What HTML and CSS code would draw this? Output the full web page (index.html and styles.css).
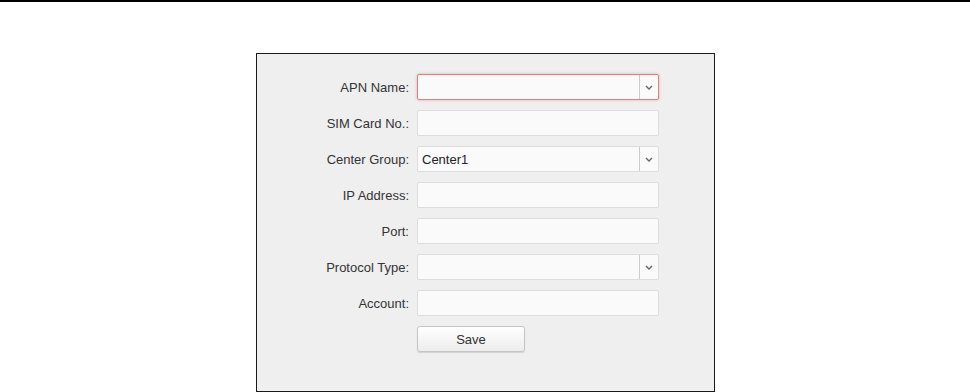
FILE: index.html
```html
<!DOCTYPE html>
<html lang="en">
<head>
  <meta charset="UTF-8">
  <meta name="viewport" content="width=device-width, initial-scale=1.0">
  <title>Mobile Network</title>
  <link rel="stylesheet" href="styles.css">
</head>
<body>
  <div class="topbar"></div>
  <div class="panel">
    <div class="form">
      <label class="lbl">APN Name:</label>
      <div class="field select error"><span class="val"></span><span class="arrow"><svg width="8" height="5" viewBox="0 0 8 5"><path d="M1 1l3 3 3-3" fill="none" stroke="#666" stroke-width="1.4"/></svg></span></div>

      <label class="lbl">SIM Card No.:</label>
      <div class="field"></div>

      <label class="lbl">Center Group:</label>
      <div class="field select"><span class="val">Center1</span><span class="arrow"><svg width="8" height="5" viewBox="0 0 8 5"><path d="M1 1l3 3 3-3" fill="none" stroke="#666" stroke-width="1.4"/></svg></span></div>

      <label class="lbl">IP Address:</label>
      <div class="field"></div>

      <label class="lbl">Port:</label>
      <div class="field"></div>

      <label class="lbl">Protocol Type:</label>
      <div class="field select"><span class="val"></span><span class="arrow"><svg width="8" height="5" viewBox="0 0 8 5"><path d="M1 1l3 3 3-3" fill="none" stroke="#666" stroke-width="1.4"/></svg></span></div>

      <label class="lbl">Account:</label>
      <div class="field"></div>

      <span></span>
      <div><button class="save">Save</button></div>
    </div>
  </div>
</body>
</html>
```

FILE: styles.css
```css
body { margin: 0; background: #ffffff; font-family: "Liberation Sans", Arial, sans-serif; font-size: 13px; color: #333333; }
.topbar { height: 2px; background: #000000; }
.panel { margin: 51px 0 0 256px; width: 457px; height: 317px; border: 1px solid #1a1a1a; background: #efefef; padding-top: 20px; }
.form { display: grid; grid-template-columns: 152px 242px; grid-auto-rows: 26px; column-gap: 8px; row-gap: 10px; }
.lbl { display: flex; align-items: center; justify-content: flex-end; color: #333333; }
.field { box-sizing: border-box; height: 26px; border: 1px solid #dddddd; border-radius: 2px; background: #fafafa; display: flex; align-items: stretch; }
.field.error { border-color: #e08080; box-shadow: 0 0 3px rgba(220, 90, 90, 0.45); }
.val { flex: 1; display: flex; align-items: center; padding-left: 4px; color: #222222; }
.arrow { width: 18px; border-left: 1px solid #cccccc; display: flex; align-items: center; justify-content: center; }
.save { box-sizing: border-box; width: 108px; height: 26px; border: 1px solid #c4c4c4; border-radius: 3px; background: linear-gradient(#ffffff, #ececec); box-shadow: 0 1px 1px rgba(0, 0, 0, 0.12); font-family: "Liberation Sans", Arial, sans-serif; font-size: 13px; color: #333333; padding: 0; }
```
